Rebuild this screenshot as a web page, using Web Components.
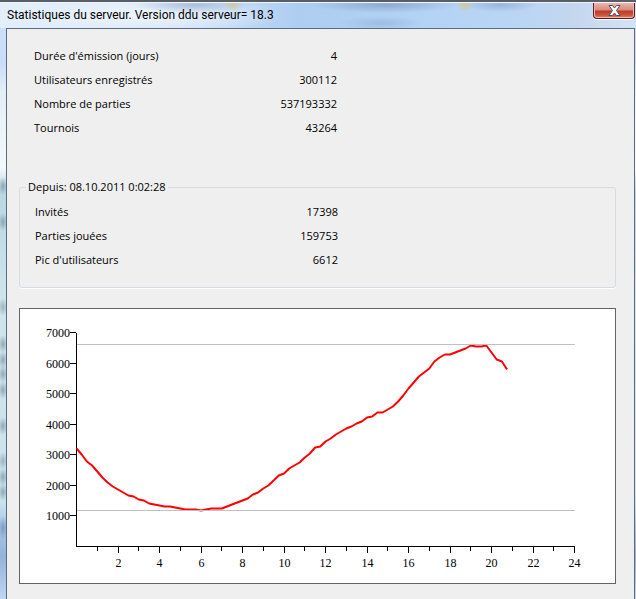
<!DOCTYPE html>
<html lang="fr">
<head>
  <meta charset="utf-8">
  <meta name="viewport" content="width=device-width, initial-scale=1">
  <title>Statistiques du serveur</title>
  <style>
    html,
    body {
      margin: 0;
      min-height: 100%;
    }

    body {
      display: flex;
      min-height: 100vh;
      color: #000;
      font: 11px/16px "Open Sans", "Noto Sans", sans-serif;
    }
  </style>
</head>
<body>
  <app-window caption="Statistiques du serveur. Version ddu serveur= 18.3">
    <stats-table id="totals"></stats-table>
    <group-box caption="Depuis: 08.10.2011 0:02:28">
      <stats-table id="session"></stats-table>
    </group-box>
    <users-chart></users-chart>
  </app-window>

  <script>
    class AppWindow extends HTMLElement {
      constructor() {
        super();
        this.attachShadow({ mode: "open" });
      }

      connectedCallback() {
        this.shadowRoot.innerHTML = `
          <style>
            :host {
              flex: 1;
              min-width: 0;
              display: flex;
              flex-direction: column;
              box-sizing: border-box;
              border-top: 2px solid #595e66;
              padding: 0 1px 0 0;
              background:
                radial-gradient(ellipse 5px 9px at 3px 184px, #8ba6b5, transparent),
                radial-gradient(ellipse 5px 9px at 3px 220px, #8ba6b5, transparent),
                radial-gradient(ellipse 5px 9px at 3px 305px, #9ab4c0, transparent),
                radial-gradient(ellipse 5px 9px at 3px 342px, #8fa9b6, transparent),
                radial-gradient(ellipse 5px 9px at 3px 358px, #8fa9b6, transparent),
                radial-gradient(ellipse 5px 9px at 3px 372px, #8fa9b6, transparent),
                radial-gradient(ellipse 5px 9px at 3px 388px, #8fa9b6, transparent),
                radial-gradient(ellipse 5px 9px at 3px 424px, #8fa9b6, transparent),
                radial-gradient(ellipse 5px 9px at 3px 459px, #9ab4c0, transparent),
                radial-gradient(ellipse 5px 9px at 3px 475px, #8fa9b6, transparent),
                radial-gradient(ellipse 5px 9px at 3px 490px, #8fa9b6, transparent),
                radial-gradient(ellipse 5px 12px at 3px 526px, #7f9cc4, transparent),
                linear-gradient(#cfe2fa 0, #c8ddfa 60px, #e2eff6 90px, #f4f9fb 165px, #b9d7e2 190px, #cfe5ec 300px, #cbe3ec 500px, #a9c5e8 525px, #94b3d8 555px, #c2d8f5 599px);
            }

            header {
              display: flex;
              justify-content: space-between;
              align-items: flex-start;
              height: 26px;
              box-sizing: border-box;
              border-top: 1px solid #eef5fd;
              background:
                radial-gradient(ellipse 9px 7px at 233px 1px, #cfc99b, transparent),
                radial-gradient(ellipse 9px 7px at 465px 2px, #cfc99b, transparent),
                radial-gradient(ellipse 42px 7px at 381px 20px, #9dbce2, transparent),
                radial-gradient(ellipse 75px 8px at 385px 2px, #8fabd0, transparent),
                radial-gradient(ellipse 38px 7px at 500px 2px, #98b6dc, transparent),
                radial-gradient(ellipse 60px 8px at 195px 2px, #a9bfdb, transparent),
                radial-gradient(ellipse 150px 20px at 135px 12px, #eef4fc, transparent),
                linear-gradient(90deg, #e3eefb 0, #d3e3f8 180px, #adcdf1 300px, #b3d3f5 420px, #bcd6f4 540px, #c3d6ee 570px, #d3e3f7 100%);
            }

            h1 {
              margin: 0;
              padding: 4px 0 0 7px;
              font: 12px/16px Roboto, "Open Sans", sans-serif;
            }

            button {
              display: flex;
              justify-content: center;
              align-items: center;
              width: 42px;
              height: 16px;
              box-sizing: border-box;
              margin: 0;
              padding: 0;
              border: 1px solid #5b1f20;
              border-top: 0;
              border-radius: 0 0 4px 4px;
              background: linear-gradient(#eab5ac 0, #d98a7e 7px, #bf3b26 8px, #c9523b 12px, #dd8a78 100%);
              box-shadow: inset 0 0 0 1px #eeb6a9, 0 1px 1px #fff;
            }

            main {
              flex: 1;
              display: flex;
              flex-direction: column;
              margin-left: 6px;
              padding: 15px 18px 15px 12px;
              border: 1px solid #5b6c80;
              border-bottom: 0;
              background: #efefef;
            }
          </style>
          <header>
            <h1>${this.getAttribute("caption")}</h1>
            <button type="button" aria-label="Fermer">
              <svg width="13" height="11" viewBox="0 0 13 11" aria-hidden="true">
                <path d="M1 .5h3.500L6.500 3 8.500.5H12L8.500 5.500 12 10.500H8.500L6.500 8 4.500 10.500H1L4.500 5.500Z" fill="#fff" stroke="#4b5262" stroke-linejoin="round"/>
              </svg>
            </button>
          </header>
          <main><slot></slot></main>
        `;
      }
    }

    class GroupBox extends HTMLElement {
      constructor() {
        super();
        this.attachShadow({ mode: "open" });
      }

      connectedCallback() {
        this.shadowRoot.innerHTML = `
          <style>
            :host {
              display: block;
              margin-top: 39px;
            }

            fieldset {
              min-width: 0;
              margin: 0;
              padding: 5px 0 15px;
              border: 1px solid #d3dde5;
              border-radius: 3px;
              box-shadow: 0 1px #fff;
            }

            legend {
              margin-left: 6px;
              padding: 0 2px;
            }
          </style>
          <fieldset>
            <legend>${this.getAttribute("caption")}</legend>
            <slot></slot>
          </fieldset>
        `;
      }
    }

    class StatsTable extends HTMLElement {
      constructor() {
        super();
        this.attachShadow({ mode: "open" });
      }

      set rows(rows) {
        this._rows = rows;
        this.render();
      }

      render() {
        this.shadowRoot.innerHTML = `
          <style>
            :host {
              display: block;
              padding-left: 15px;
            }

            table {
              width: 100%;
              max-width: 303px;
              border-collapse: collapse;
            }

            th,
            td {
              height: 24px;
              padding: 0;
              font-weight: normal;
              text-align: left;
            }

            td {
              text-align: right;
            }
          </style>
          <table>
            ${this._rows.map(([label, value]) => `
              <tr><th scope="row">${label}</th><td>${value}</td></tr>
            `).join("")}
          </table>
        `;
      }
    }

    // one point every 15 minutes, height above the time axis
    const USERS = [
      98, 92, 85, 81, 75, 69, 64, 60, 57, 54, 51, 50, 47, 46, 43, 42, 41, 40, 40, 39, 38,
      37, 37, 37, 36, 37, 38, 38, 38, 40, 42, 44, 46, 48, 52, 54, 58, 61, 66, 71, 73,
      78, 81, 84, 89, 93, 99, 100, 105, 108, 112, 115, 118, 120, 123, 125, 129, 130,
      134, 134, 137, 140, 145, 151, 158, 164, 170, 174, 178, 185, 189, 192, 192, 194,
      196, 198, 201, 200, 200, 201, 194, 187, 185, 177
    ];

    const ORIGIN_X = 56.5;
    const ORIGIN_Y = 237.5;
    const PLOT_WIDTH = 498;
    const PLOT_HEIGHT = 214;

    class UsersChart extends HTMLElement {
      constructor() {
        super();
        this.attachShadow({ mode: "open" });
      }

      connectedCallback() {
        this.shadowRoot.innerHTML = `
          <style>
            :host {
              display: block;
              margin-top: 20px;
              border: 1px solid #646464;
              background: #fff;
            }

            svg {
              display: block;
              width: 100%;
            }

            text {
              font: 12px "Liberation Serif", serif;
            }

            .axis {
              fill: none;
              stroke: #000;
              shape-rendering: crispEdges;
            }

            .limit {
              stroke: #c0c0c0;
              shape-rendering: crispEdges;
            }

            .users {
              fill: none;
              stroke: #f00;
              stroke-width: 2;
              stroke-linejoin: round;
            }
          </style>
          <svg viewBox="0 0 595 274" role="img" aria-label="Utilisateurs par heure">
            ${this.yAxis()}
            ${this.xAxis()}
            <polyline class="users" points="${this.points()}"/>
            ${this.limit(202)}
            ${this.limit(36)}
          </svg>
        `;
      }

      yAxis() {
        let out = `<path class="axis" d="M${ORIGIN_X} ${ORIGIN_Y}v-${PLOT_HEIGHT}"/>`;
        for (let i = 1; i <= 7; i++) {
          const y = ORIGIN_Y - Math.round(i * PLOT_HEIGHT / 7);
          out += `<path class="axis" d="M50 ${y}h6"/>
            <text x="50" y="${y + 4}" text-anchor="end">${i * 1000}</text>`;
        }
        return out;
      }

      xAxis() {
        let out = `<path class="axis" d="M56 ${ORIGIN_Y}h${PLOT_WIDTH + 1}"/>`;
        for (let hour = 1; hour <= 24; hour++) {
          const x = ORIGIN_X + Math.round(hour * PLOT_WIDTH / 24);
          const major = hour % 2 === 0;
          out += `<path class="axis" d="M${x} ${ORIGIN_Y}v${major ? 6 : 4}"/>`;
          if (major) {
            out += `<text x="${x}" y="258" text-anchor="middle">${hour}</text>`;
          }
        }
        return out;
      }

      limit(height) {
        const y = ORIGIN_Y - height;
        return `<path class="limit" d="M57 ${y}h${PLOT_WIDTH}"/>`;
      }

      points() {
        return USERS.map((height, i) =>
          `${(ORIGIN_X + i * PLOT_WIDTH / 96).toFixed(1)},${ORIGIN_Y - height}`
        ).join(" ");
      }
    }

    customElements.define("app-window", AppWindow);
    customElements.define("group-box", GroupBox);
    customElements.define("stats-table", StatsTable);
    customElements.define("users-chart", UsersChart);

    document.querySelector("#totals").rows = [
      ["Durée d'émission (jours)", "4"],
      ["Utilisateurs enregistrés", "300112"],
      ["Nombre de parties", "537193332"],
      ["Tournois", "43264"]
    ];

    document.querySelector("#session").rows = [
      ["Invités", "17398"],
      ["Parties jouées", "159753"],
      ["Pic d'utilisateurs", "6612"]
    ];
  </script>
</body>
</html>
